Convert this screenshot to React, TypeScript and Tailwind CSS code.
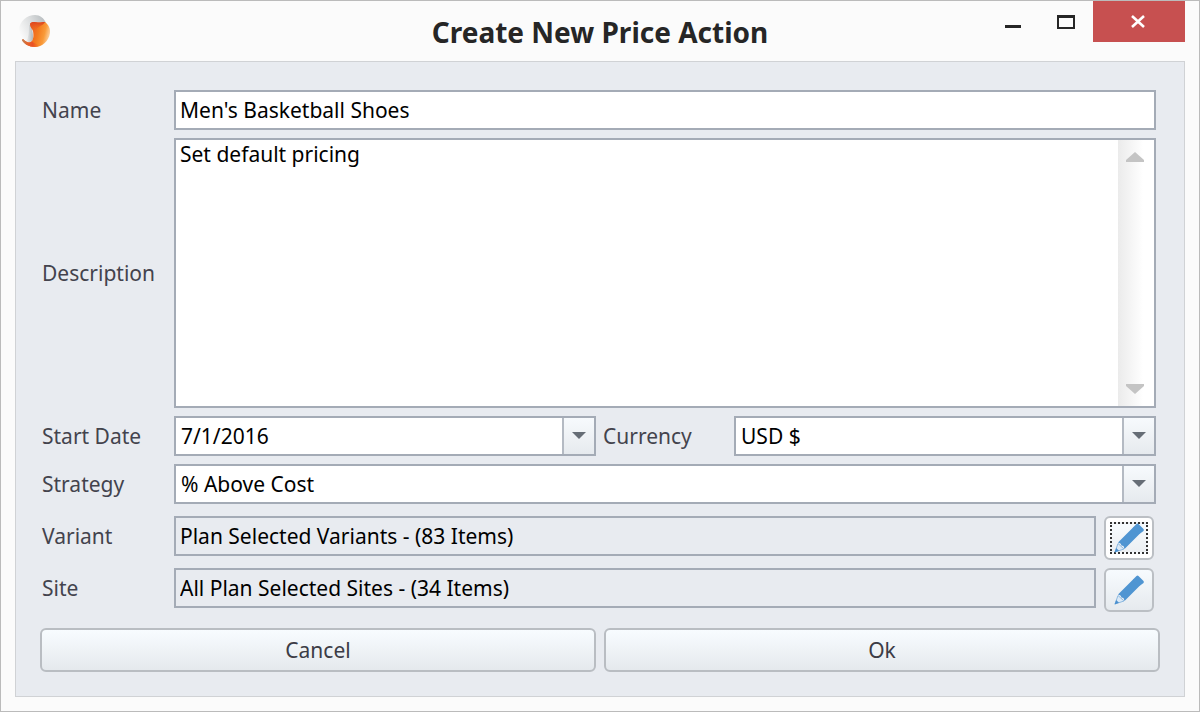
import { useState } from "react";
import type { ReactNode } from "react";

const label = "shrink-0 text-[21px] leading-[28px] text-[#43434d]";
const box = "border-2 border-[#a4abb6]";
const value = "text-[21px] leading-[28px] text-black";

function Logo() {
  return (
    <svg width="34" height="34" viewBox="0 0 34 34" aria-hidden="true">
      <defs>
        <linearGradient id="silver" x1="0" y1="0.6" x2="1" y2="0.1">
          <stop offset="0" stopColor="#fafafa" />
          <stop offset="0.5" stopColor="#dcdedf" />
          <stop offset="1" stopColor="#b5babd" />
        </linearGradient>
        <linearGradient id="flame" gradientUnits="userSpaceOnUse" x1="11" y1="14" x2="32" y2="19">
          <stop offset="0" stopColor="#ea5a20" />
          <stop offset="0.4" stopColor="#f47c1f" />
          <stop offset="0.7" stopColor="#f99a38" />
          <stop offset="1" stopColor="#fddcb4" />
        </linearGradient>
        <linearGradient id="shaft" x1="0" y1="0" x2="1" y2="0">
          <stop offset="0" stopColor="#f4f4f4" />
          <stop offset="1" stopColor="#b0b6b9" />
        </linearGradient>
        <linearGradient id="tip" x1="0.3" y1="0" x2="0.2" y2="1">
          <stop offset="0" stopColor="#dd4420" />
          <stop offset="1" stopColor="#ee6520" stopOpacity="0" />
        </linearGradient>
        <linearGradient id="tail" x1="0" y1="0" x2="1" y2="0">
          <stop offset="0" stopColor="#b98558" />
          <stop offset="0.3" stopColor="#e5642c" />
          <stop offset="0.6" stopColor="#ea4f24" />
          <stop offset="1" stopColor="#f37a20" stopOpacity="0" />
        </linearGradient>
      </defs>
      <path d="M0 14C1 6 8 0 16 0 21 0 25 3 27 8L13 9C12 13 15 20 14 25 13 28 9 28 5 25 2 22 0 18 0 14Z" fill="url(#silver)" />
      <path d="M10 10C10 15 10 22 7 27 10 28 14 27 14 23 14 18 13 14 12 10Z" fill="url(#shaft)" />
      <path d="M11 9C12 6.500 16 7 19 7.500 22 7.500 24 7 26 7 30 10 31.500 14 31 18 30 26 23 32 16 32 10 32 5 29 3 25L4 24C7 27 10 28.500 12.500 26.500 15 24 14.500 19 14 16 13 13.500 11 12 11 9Z" fill="url(#flame)" />
      <path d="M11 9C12 6.500 16 7 19 7.500 22 7.500 24 7 26 7 24 11 19 11 17 15L14 16C13 13.500 11 12 11 9Z" fill="url(#tip)" />
      <path d="M3 25L4 24C7 27 10 28.500 12.500 26.500L21 31C19 32 17 32 16 32 10 32 5 29 3 25Z" fill="url(#tail)" />
    </svg>
  );
}

function Pencil() {
  return (
    <svg width="32" height="32" viewBox="0 0 32 32" aria-hidden="true">
      <path d="M2 30 5 21.500 11 27Z" fill="#dbe9f6" stroke="#8db9e0" strokeWidth="1" />
      <path d="M1.500 30.500 3.200 26 6 28.700Z" fill="#4a90cf" />
      <path d="M5 20.500 20.500 5 27 11.500 11.500 27 10.500 24 8.500 23.500 7.500 21.500Z" fill="#4f95d2" />
      <path d="M20 5.500 23.500 2Q24.500 1 25.500 2L30.500 7Q31.300 8 30.500 9L26.500 12Z" fill="#4f95d2" />
    </svg>
  );
}

function Arrow() {
  return (
    <svg width="14" height="8" viewBox="0 0 14 8" aria-hidden="true">
      <path d="M0 0H14L7 7Z" fill="#666d76" />
    </svg>
  );
}

const arrowCell = "flex w-8 shrink-0 items-center justify-center border-l-2 border-[#b4bac3] bg-linear-to-b from-[#f7fafd] to-[#e6eaee]";

function Combo({ id, options }: { id: string; options: string[] }) {
  return (
    <div className={`relative flex h-10 min-w-0 flex-1 bg-white ${box}`}>
      <select id={id} className={`w-full appearance-none bg-transparent pl-[5px] pr-8 outline-none ${value}`}>
        {options.map((o) => (
          <option key={o}>{o}</option>
        ))}
      </select>
      <span className={`pointer-events-none absolute inset-y-0 right-0 ${arrowCell}`}>
        <Arrow />
      </span>
    </div>
  );
}

function Row({ id, text, children }: { id: string; text: string; children: ReactNode }) {
  return (
    <div className="flex items-center pl-0.5 pr-1">
      <label htmlFor={id} className={`w-[132px] ${label}`}>{text}</label>
      {children}
    </div>
  );
}

function Picker({ id, text, items, focused }: { id: string; text: string; items: string; focused?: boolean }) {
  return (
    <div className="flex items-start pl-0.5 pr-1.5">
      <label htmlFor={id} className={`w-[132px] py-1.5 ${label}`}>{text}</label>
      <input id={id} readOnly value={items} className={`h-10 min-w-0 flex-1 bg-transparent px-1 outline-none ${box} ${value}`} />
      <button
        type="button"
        aria-label={`Edit ${text}`}
        className={`ml-2 flex h-11 w-[50px] items-center justify-center rounded-md border-2 border-[#bbbfc4] ${focused ? "bg-white" : "bg-linear-to-b from-[#f7fbfe] to-[#e6eaee]"}`}
      >
        <span className={`flex h-8 w-[38px] items-center justify-center border-2 ${focused ? "border-dotted border-[#333] bg-linear-to-b from-[#f7fbfe] to-[#eceff2]" : "border-transparent"}`}>
          <Pencil />
        </span>
      </button>
    </div>
  );
}

const action = "h-11 flex-1 rounded-md border-2 border-[#b9bdc2] bg-linear-to-b from-[#f8fcff] to-[#e5e9ed] text-[21px] leading-[28px] text-[#3c3c46]";

export default function App() {
  const [name, setName] = useState("Men's Basketball Shoes");
  const [description, setDescription] = useState("Set default pricing");
  const [date, setDate] = useState("7/1/2016");

  return (
    <div className="flex min-h-screen flex-col border border-[#bbb] bg-[#fbfbfb] px-3.5 pb-3.5 font-['Noto_Sans',sans-serif]">
      <header className="grid h-[60px] shrink-0 grid-cols-[1fr_auto_1fr]">
        <div className="pl-1 pt-3.5">
          <Logo />
        </div>
        <h1 className="pt-3 text-[28px] font-bold leading-[38px] text-[#262626]">Create New Price Action</h1>
        <div className="flex h-[41px] justify-end">
          <button type="button" aria-label="Minimize" className="flex w-[52px] items-center justify-center">
            <svg width="16" height="20"><path d="M0 13H16V16H0Z" fill="#262626" /></svg>
          </button>
          <button type="button" aria-label="Maximize" className="flex w-[54px] items-center justify-center">
            <svg width="18" height="14"><path d="M0 0H18V14H0ZM2 3V12H16V3Z" fillRule="evenodd" fill="#262626" /></svg>
          </button>
          <button type="button" aria-label="Close" className="flex w-[92px] items-center justify-center bg-[#c75050]">
            <svg width="16" height="14" viewBox="0 0 16 14"><path d="M1 1 13 12M13 1 1 12" stroke="#fff" strokeWidth="2.600" /></svg>
          </button>
        </div>
      </header>

      <form className="flex flex-1 flex-col gap-2 border border-[#d0d2d5] bg-[#e8ebf0] px-6 pb-6 pt-7" onSubmit={(e) => e.preventDefault()}>
        <Row id="name" text="Name">
          <input id="name" value={name} onChange={(e) => setName(e.target.value)} className={`h-10 min-w-0 flex-1 bg-white px-1 outline-none ${box} ${value}`} />
        </Row>

        <div className="flex min-h-32 flex-1 items-center pl-0.5 pr-1">
          <label htmlFor="description" className={`w-[132px] ${label}`}>Description</label>
          <div className={`flex min-w-0 flex-1 self-stretch bg-white ${box}`}>
            <textarea
              id="description"
              value={description}
              onChange={(e) => setDescription(e.target.value)}
              className={`min-w-0 flex-1 resize-none overflow-hidden px-1 outline-none ${value}`}
            />
            <div className="flex w-9 flex-col items-center justify-between bg-linear-to-r from-[#ebebeb] to-white to-70% py-3 pr-0.5">
              <svg width="18" height="10"><path d="M0 10V8L9 0 18 8V10Z" fill="#c4c4c4" /></svg>
              <svg width="18" height="10"><path d="M0 0V2L9 10 18 2V0Z" fill="#c4c4c4" /></svg>
            </div>
          </div>
        </div>

        <div className="flex items-center pl-0.5 pr-1">
          <label htmlFor="date" className={`w-[132px] ${label}`}>Start Date</label>
          <div className={`flex h-10 min-w-0 flex-1 bg-white ${box}`}>
            <input id="date" value={date} onChange={(e) => setDate(e.target.value)} className={`min-w-0 flex-1 px-[5px] outline-none ${value}`} />
            <button type="button" aria-label="Pick date" className={arrowCell}>
              <Arrow />
            </button>
          </div>
          <label htmlFor="currency" className={`w-[138px] pl-[7px] ${label}`}>Currency</label>
          <Combo id="currency" options={["USD $", "EUR €"]} />
        </div>

        <Row id="strategy" text="Strategy">
          <Combo id="strategy" options={["% Above Cost", "% Below Retail"]} />
        </Row>

        <div className="flex flex-col gap-2 pb-2 pt-1">
          <Picker id="variant" text="Variant" items="Plan Selected Variants - (83 Items)" focused />
          <Picker id="site" text="Site" items="All Plan Selected Sites - (34 Items)" />
        </div>

        <div className="flex gap-2">
          <button type="button" className={action}>Cancel</button>
          <button type="submit" className={action}>Ok</button>
        </div>
      </form>
    </div>
  );
}
